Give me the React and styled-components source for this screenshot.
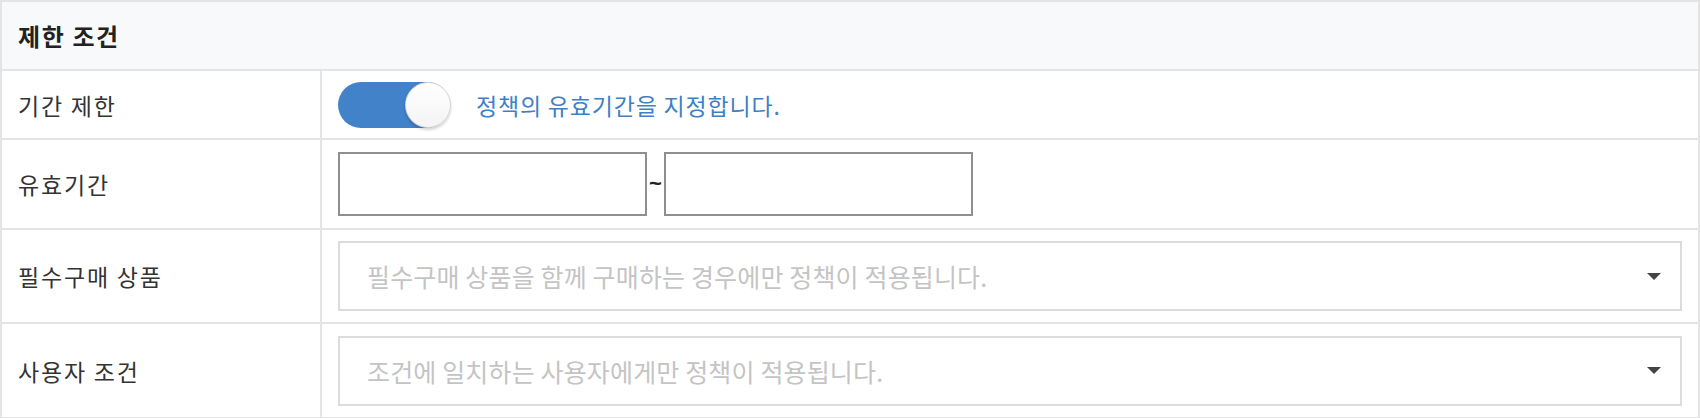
import React, { useState } from 'react';
import styled, { createGlobalStyle } from 'styled-components';

const GlobalStyle = createGlobalStyle`
	html, body {
		margin: 0;
		padding: 0;
		background: #fff;
	}
	body {
		font-family: "Noto Sans CJK KR", "Noto Sans", sans-serif;
		color: #333;
	}
`;

const lineColor = '#e4e4e4';

const Table = styled.div`
	box-sizing: border-box;
	width: 1700px;
	border: 2px solid ${lineColor};
	border-bottom-width: 1px;
`;

const Header = styled.div`
	box-sizing: border-box;
	height: 67px;
	display: flex;
	align-items: center;
	padding: 0 16px;
	background: #f8f9fb;
	font-size: 24px;
	font-weight: 700;
	letter-spacing: 1.6px;
	color: #222;
`;

const Row = styled.div`
	display: grid;
	grid-template-columns: 320px 1fr;
	border-top: 2px solid ${lineColor};
	min-height: ${(p) => p.height}px;
`;

const Label = styled.div`
	display: flex;
	align-items: center;
	padding: 0 16px;
	border-right: 2px solid ${lineColor};
	font-size: 23px;
	letter-spacing: 1.8px;
	color: #333;
`;

const Cell = styled.div`
	box-sizing: border-box;
	display: flex;
	align-items: center;
	padding: ${(p) => p.pad || '10px 16px'};
`;

const Switch = styled.button`
	position: relative;
	width: 112px;
	height: 46px;
	padding: 0;
	border: none;
	border-radius: 23px;
	background: #4282c9;
	cursor: pointer;
	flex: none;
`;

const Knob = styled.span`
	position: absolute;
	top: 0;
	right: -1px;
	width: 46px;
	height: 46px;
	box-sizing: border-box;
	border-radius: 50%;
	background: linear-gradient(#fff, #f4f4f4);
	border: 1px solid #d6d6d6;
	box-shadow: 0 2px 3px rgba(0, 0, 0, 0.18);
`;

const Hint = styled.span`
	margin-left: 26px;
	font-size: 23px;
	letter-spacing: 0.8px;
	color: #3f7fc6;
`;

const DateInput = styled.input`
	box-sizing: border-box;
	width: 309px;
	height: 64px;
	border: 2px solid #8f8f93;
	border-radius: 0;
	background: #fff;
	font-size: 18px;
	padding: 0 10px;
`;

const Tilde = styled.span`
	width: 17px;
	text-align: center;
	font-family: "Liberation Sans", sans-serif;
	font-size: 22px;
	font-weight: 700;
	color: #222;
`;

const Select = styled.div`
	box-sizing: border-box;
	flex: 1;
	height: 70px;
	display: flex;
	align-items: center;
	justify-content: space-between;
	padding: 0 19px 0 27px;
	border: 2px solid #dcdcdc;
	background: #fff;
	cursor: pointer;
`;

const Placeholder = styled.span`
	font-size: 25px;
	letter-spacing: 0.15px;
	color: #c4c4c4;
`;

const Caret = styled.span`
	width: 0;
	height: 0;
	border-left: 7px solid transparent;
	border-right: 7px solid transparent;
	border-top: 7px solid #444;
`;

const App = () => {
	const [enabled, setEnabled] = useState(true);
	return (
		<>
			<GlobalStyle />
			<Table>
				<Header>제한 조건</Header>
				<Row height={67}>
					<Label>기간 제한</Label>
					<Cell>
						<Switch onClick={() => setEnabled(!enabled)} aria-pressed={enabled}>
							<Knob />
						</Switch>
						<Hint>정책의 유효기간을 지정합니다.</Hint>
					</Cell>
				</Row>
				<Row height={88}>
					<Label>유효기간</Label>
					<Cell pad="11px 16px">
						<DateInput type="text" />
						<Tilde>~</Tilde>
						<DateInput type="text" />
					</Cell>
				</Row>
				<Row height={92}>
					<Label>필수구매 상품</Label>
					<Cell>
						<Select>
							<Placeholder>필수구매 상품을 함께 구매하는 경우에만 정책이 적용됩니다.</Placeholder>
							<Caret />
						</Select>
					</Cell>
				</Row>
				<Row height={93}>
					<Label>사용자 조건</Label>
					<Cell>
						<Select>
							<Placeholder>조건에 일치하는 사용자에게만 정책이 적용됩니다.</Placeholder>
							<Caret />
						</Select>
					</Cell>
				</Row>
			</Table>
		</>
	);
};

export default App;
